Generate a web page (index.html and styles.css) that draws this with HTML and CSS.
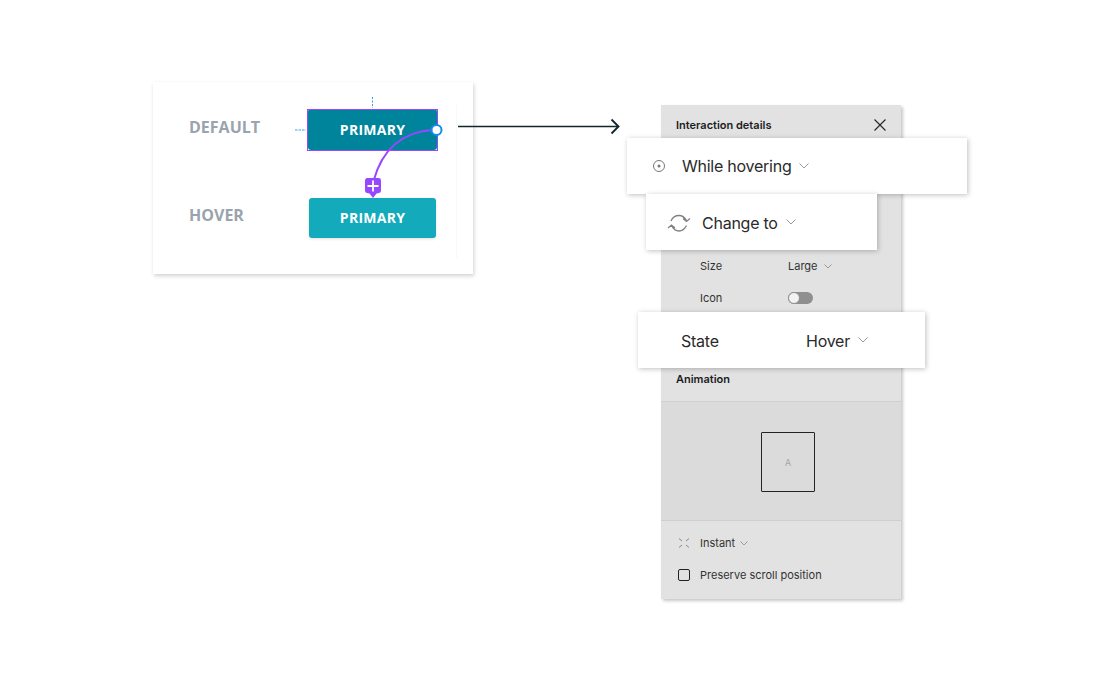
FILE: index.html
```html
<!DOCTYPE html>
<html lang="en">
<head>
<meta charset="utf-8">
<title>Interaction details</title>
<link rel="stylesheet" href="styles.css">
</head>
<body>
<main class="stage">
  <section class="frame">
    <div class="frame-grid">
      <span class="state-label">DEFAULT</span>
      <button class="btn btn-default">PRIMARY</button>
      <span class="state-label">HOVER</span>
      <button class="btn btn-hover">PRIMARY</button>
    </div>
    <i class="frame-edge"></i>
  </section>

  <svg class="overlay" width="1120" height="680" viewBox="0 0 1120 680" fill="none" aria-hidden="true">
    <path d="M372.500 97V108" stroke="#2f9df0" stroke-dasharray="2 1.500"/>
    <path d="M295 130H306" stroke="#7cc4f5" stroke-width="1.500" stroke-dasharray="2.500 1"/>
    <rect x="307.500" y="109.500" width="130" height="41" stroke="#9747ff"/>
    <path d="M432 130C402 132 382 150 373.500 181" stroke="#9747ff" stroke-width="2"/>
    <circle cx="436.500" cy="130" r="5" fill="#fff" stroke="#0d8cf2" stroke-width="2"/>
    <path d="M367 178H379A2.500 2.500 0 0 1 381 180.500V190.500A2.500 2.500 0 0 1 379 193L376.500 193.500L373 198L369.500 193.500L367 193A2.500 2.500 0 0 1 365 190.500V180.500A2.500 2.500 0 0 1 367 178Z" fill="#9747ff"/>
    <path d="M373 180.500V191.500M367.500 186H378.500" stroke="#fff" stroke-width="1.800"/>
    <path d="M458 126.500H618" stroke="#12262e" stroke-width="1.700"/>
    <path d="M611.500 119.500L618.500 126.500L611.500 133.500" stroke="#12262e" stroke-width="1.900"/>
  </svg>

  <aside class="panel">
    <header class="panel-head">
      <h2 class="panel-title">Interaction details</h2>
      <svg class="close" width="14" height="14" viewBox="0 0 14 14" fill="none" aria-hidden="true"><path d="M1.500 1.500L12.500 12.500M12.500 1.500L1.500 12.500" stroke="#222" stroke-width="1.100"/></svg>
    </header>
    <div class="prop-rows">
      <div class="prop-row"><span class="prop-name">Size</span><span class="prop-value">Large<svg class="chev-sm" width="8" height="5" viewBox="0 0 8 5" fill="none"><path d="M.5.500L4 4L7.500.500" stroke="#999"/></svg></span></div>
      <div class="prop-row"><span class="prop-name">Icon</span><span class="toggle"><i class="knob"></i></span></div>
    </div>
    <h2 class="panel-title anim-title">Animation</h2>
    <div class="preview"><div class="preview-box">A</div></div>
    <div class="panel-foot">
      <div class="foot-row">
        <svg class="foot-icon" width="12" height="12" viewBox="0 0 12 12" fill="none" aria-hidden="true"><path d="M1 1.500L4 4M11 1.500L8 4M1 10.500L4 8M11 10.500L8 8" stroke="#888"/></svg>
        <span class="foot-text">Instant</span>
        <svg class="chev-sm" width="8" height="5" viewBox="0 0 8 5" fill="none"><path d="M.5.500L4 4L7.500.500" stroke="#999"/></svg>
      </div>
      <div class="foot-row">
        <span class="checkbox"></span>
        <span class="foot-text">Preserve scroll position</span>
      </div>
    </div>
  </aside>

  <div class="callout callout-while">
    <svg class="ico-target" width="14" height="14" viewBox="0 0 14 14" fill="none" aria-hidden="true"><circle cx="7" cy="7" r="5.500" stroke="#777"/><circle cx="7" cy="7" r="1.500" fill="#777"/></svg>
    <span class="callout-text">While hovering</span>
    <svg class="chev" width="10" height="6" viewBox="0 0 10 6" fill="none"><path d="M.5.500L5 5L9.500.500" stroke="#999"/></svg>
  </div>
  <div class="callout callout-change">
    <svg class="ico-swap" width="24" height="20" viewBox="0 0 24 20" fill="none" aria-hidden="true"><path d="M4 8C5.500 4.500 8.500 2.500 12 2.500C15 2.500 17.500 4 19.500 7.500M16 5.500L19.500 8.500L23 5.500" stroke="#808080" stroke-width="1.300"/><path d="M19.500 12.500C17.500 16.500 15 18 12 18C9 18 6.500 16.500 4.500 12.500M1 15L4.500 12L8 15" stroke="#808080" stroke-width="1.300"/></svg>
    <span class="callout-text">Change to</span>
    <svg class="chev" width="10" height="6" viewBox="0 0 10 6" fill="none"><path d="M.5.500L5 5L9.500.500" stroke="#999"/></svg>
  </div>
  <div class="callout callout-state">
    <span class="callout-text state-name">State</span>
    <span class="callout-text">Hover</span>
    <svg class="chev" width="10" height="6" viewBox="0 0 10 6" fill="none"><path d="M.5.500L5 5L9.500.500" stroke="#999"/></svg>
  </div>
</main>
</body>
</html>
```
FILE: styles.css
```css
* { box-sizing: border-box; }
html, body { margin: 0; background: #fff; }
.stage { position: relative; width: 1120px; height: 680px; overflow: hidden; font-family: Inter, "Liberation Sans", sans-serif; }

.frame { position: absolute; left: 153px; top: 82px; width: 320px; height: 192px; background: #fff; box-shadow: 1px 2px 4px rgba(0,0,0,.18); }
.frame-grid { display: grid; grid-template-columns: 119px 129px; grid-template-rows: 41px 40px; row-gap: 48px; padding: 27px 0 0 36px; align-items: center; font-family: "Open Sans", "Liberation Sans", sans-serif; }
.frame-edge { position: absolute; left: 303px; top: 23px; width: 1px; height: 153px; background: #f8f8f8; }
.state-label { font-size: 16px; font-weight: 700; color: #9aa3ae; position: relative; top: -3px; }
.btn { border: 0; margin: 0; padding: 0; border-radius: 3px; color: #fff; font: 700 14px "Open Sans", "Liberation Sans", sans-serif; letter-spacing: .25px; height: 100%; }
.btn-default { background: #00849c; }
.btn-hover { background: #13abbb; margin: 0 1px; padding-bottom: 1px; box-shadow: 0 1px 3px rgba(0,0,0,.12); }

.overlay { position: absolute; left: 0; top: 0; z-index: 1; }

.panel { position: absolute; left: 661px; top: 105px; width: 240px; height: 494px; background: #e2e2e2; box-shadow: 2px 2px 3px rgba(0,0,0,.22); display: flex; flex-direction: column; color: #222; }
.panel-head { height: 40px; padding: 0 14px 0 15px; display: flex; align-items: center; justify-content: space-between; }
.panel-title { margin: 0; font-size: 11px; font-weight: 600; color: #1c1c1c; line-height: 20px; }
.prop-rows { margin-top: 105px; }
.prop-row { height: 32px; padding-left: 39px; display: flex; align-items: center; font-size: 11px; color: #333; }
.prop-name { width: 88px; }
.prop-value { display: flex; align-items: center; gap: 6px; }
.toggle { width: 25px; height: 12px; border-radius: 6px; background: #8f8f8f; position: relative; }
.knob { position: absolute; left: 0; top: 0; width: 12px; height: 12px; border-radius: 50%; background: #f2f2f2; border: 1px solid #8f8f8f; }
.anim-title { margin: 55px 0 12px 15px; }
.preview { height: 120px; padding: 2px 0 0 14px; background: #dbdbdb; border-top: 1px solid #cfcfcf; border-bottom: 1px solid #cfcfcf; display: flex; align-items: center; justify-content: center; }
.preview-box { width: 54px; height: 60px; border: 1px solid #222; border-radius: 1px; display: flex; align-items: center; justify-content: center; font-size: 9px; color: #a5a5a5; }
.panel-foot { padding-top: 6px; }
.foot-row { height: 32px; padding-left: 17px; display: flex; align-items: center; font-size: 11px; color: #333; }
.foot-icon { margin-right: 10px; }
.foot-text { margin-right: 5px; }
.checkbox { width: 12px; height: 12px; border: 1px solid #222; border-radius: 2px; margin: 0 10px 0 0; }

.callout { position: absolute; z-index: 2; height: 56px; background: #fff; display: flex; align-items: center; box-shadow: 1px 1px 5px rgba(0,0,0,.25); }
.callout-text { font-size: 16px; color: #2a2a2a; letter-spacing: -.25px; position: relative; top: 1px; }
.callout-while .callout-text { top: 0; }
.chev { margin-left: 8px; }
.callout-while { left: 627px; top: 138px; width: 340px; padding-left: 25px; }
.ico-target { margin-right: 16px; }
.callout-change { left: 646px; top: 194px; width: 231px; padding-left: 21px; }
.ico-swap { margin: 2px 11px 0 0; }
.callout-state { left: 638px; top: 312px; width: 287px; padding-left: 43px; }
.state-name { width: 125px; }
```
